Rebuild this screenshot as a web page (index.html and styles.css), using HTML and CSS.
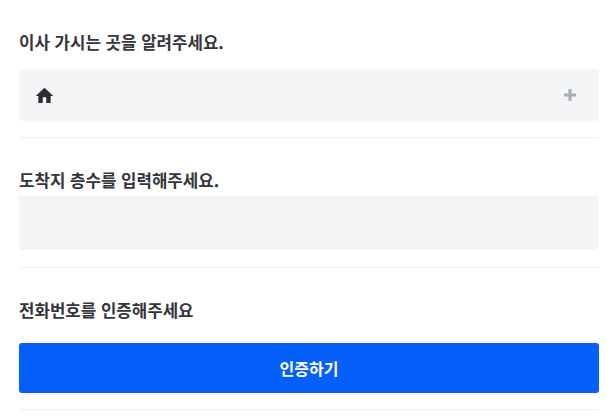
FILE: index.html
```html
<!DOCTYPE html>
<html lang="ko">
<head>
<meta charset="utf-8">
<title>이사 정보 입력</title>
<link rel="stylesheet" href="styles.css">
</head>
<body>
<main class="form">
  <section class="section first">
    <h2 class="label">이사 가시는 곳을 알려주세요.</h2>
    <div class="field address">
      <svg class="home" viewBox="0 0 24 24" aria-hidden="true"><path d="M10 20.5v-6.5h4v6.5h5v-8h3L12 3 2 12.5h3v8z"/></svg>
      <svg class="plus" viewBox="0 0 12 12" aria-hidden="true"><path d="M6 0v12M0 6h12"/></svg>
    </div>
  </section>
  <section class="section second">
    <h2 class="label">도착지 층수를 입력해주세요.</h2>
    <div class="field floor"></div>
  </section>
  <section class="section third">
    <h2 class="label">전화번호를 인증해주세요</h2>
    <button class="verify" type="button">인증하기</button>
  </section>
</main>
</body>
</html>
```
FILE: styles.css
```css
* { box-sizing: border-box; }
html, body { margin: 0; padding: 0; background: #fff; }
body { font-family: "Noto Sans CJK KR", "Noto Sans", sans-serif; color: #33363d; overflow: hidden; }
.form { display: flex; flex-direction: column; width: 599px; padding: 0 0 0 19px; }
.section { border-bottom: 1px solid #eef0f2; }
.first { padding-top: 30px; height: 138px; }
.second { padding-top: 30px; height: 130px; }
.third { padding-top: 30px; height: 142px; }
.label { margin: 0; font-size: 16.8px; line-height: 24px; font-weight: 700; }
.field { background: #f3f5f7; border-radius: 4px; }
.address { margin-top: 15px; height: 52px; display: flex; align-items: center; justify-content: space-between; padding: 0 23px 0 15px; }
.floor { margin-top: 4px; height: 54px; border-radius: 0 4px 4px 0; }
.home { width: 21px; height: 21px; fill: #2b2d33; }
.plus { width: 12px; height: 12px; fill: none; stroke: #a9adb4; stroke-width: 3; }
.verify { display: block; width: 100%; height: 50px; margin-top: 21px; border: 0; border-radius: 3px; background: #0560fb; color: #fff; font: 700 16px/24px "Noto Sans CJK KR", sans-serif; }
```
